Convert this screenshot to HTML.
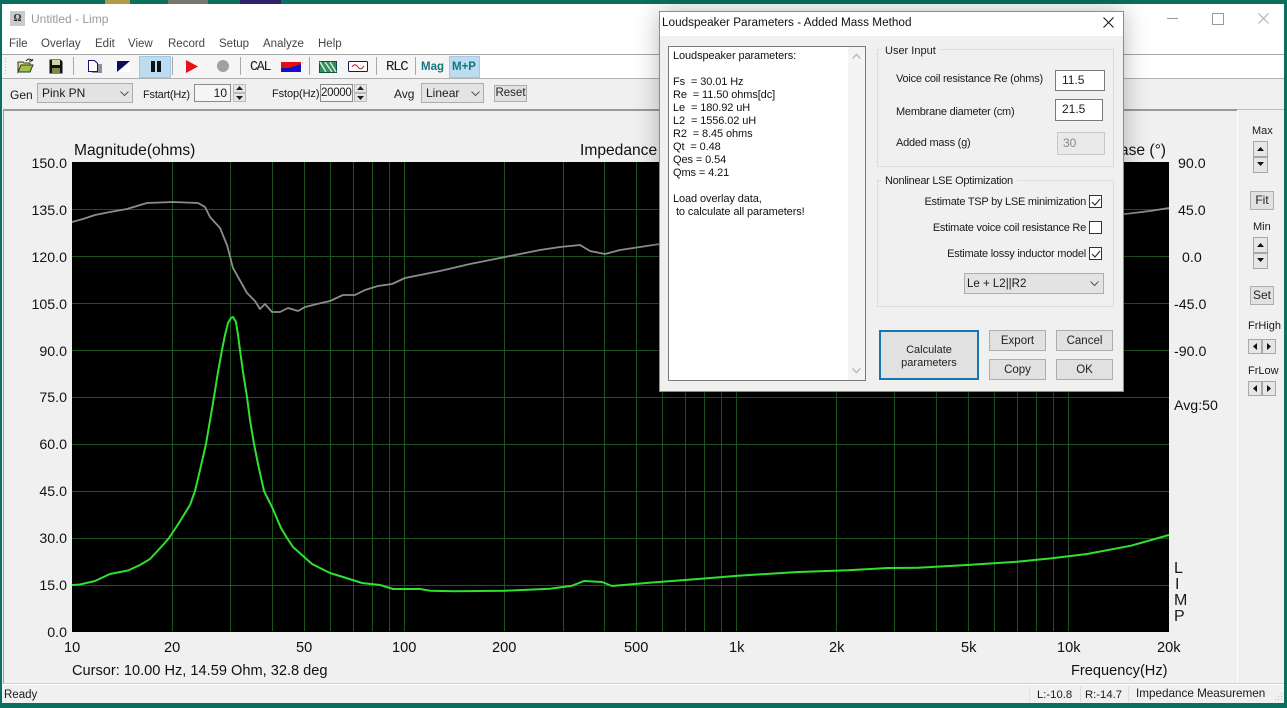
<!DOCTYPE html>
<html><head><meta charset="utf-8"><title>Untitled - Limp</title>
<style>
html,body{margin:0;padding:0;background:#0a6f5d;width:1287px;height:708px;overflow:hidden}
body{position:relative;font-family:"Liberation Sans",sans-serif;font-size:12px;color:#1a1a1a}
.a{position:absolute}
.t{position:absolute;white-space:nowrap;line-height:14px}
.c{position:absolute;white-space:nowrap;line-height:16px;font-size:14.6px;color:#111}
.r{text-align:right;width:50px;font-size:14.2px}
.m{position:absolute;white-space:nowrap;line-height:14px;color:#444;font-size:11.5px}
.sep{position:absolute;width:1px;height:18px;top:57px;background:#a8a8a8}
.btn{position:absolute;background:#e1e1e1;border:1px solid #adadad;box-sizing:border-box;text-align:center;color:#222}
.edit{position:absolute;background:#fff;border:1px solid #7a7a7a;box-sizing:border-box;line-height:18px}
.combo{position:absolute;background:#e3e3e3;border:1px solid #adadad;box-sizing:border-box;line-height:18px;padding-left:4px}
.spin{position:absolute;background:#e6e6e6;border:1px solid #a8a8a8;box-sizing:border-box}
.group{position:absolute;border:1px solid #dcdcdc;box-sizing:border-box}
.lg{position:absolute;background:#f0f0f0;padding:0 4px;line-height:14px;white-space:nowrap}
.chk{position:absolute;width:13px;height:13px;background:#fff;border:1px solid #333;box-sizing:border-box}
.d{font-size:11px;letter-spacing:-.23px}
svg{position:absolute;overflow:visible}
</style></head><body>
<div class="a" style="left:105px;top:0;width:25px;height:4px;background:#b59a45"></div>
<div class="a" style="left:168px;top:0;width:40px;height:4px;background:#77756f"></div>
<div class="a" style="left:240px;top:0;width:41px;height:4px;background:#2d2267"></div>

<!-- main window -->
<div class="a" style="left:2px;top:4px;width:1282px;height:699px;background:#f0f0f0"></div>
<div class="a" style="left:2px;top:4px;width:1282px;height:50px;background:#fff"></div>
<div class="a" style="left:2px;top:54px;width:1282px;height:1px;background:#a8a8a8"></div>
<div class="a" style="left:2px;top:55px;width:1282px;height:23px;background:#fff"></div>
<div class="a" style="left:2px;top:55px;width:478px;height:23px;background:#f5f5f5"></div>
<div class="a" style="left:2px;top:78px;width:1282px;height:1px;background:#b0b0b0"></div>
<div class="a" style="left:3px;top:109px;width:1234px;height:2px;background:#9a9a9a"></div>
<div class="a" style="left:3px;top:109px;width:1px;height:575px;background:#9a9a9a"></div>
<div class="a" style="left:1237px;top:109px;width:1px;height:575px;background:#fff"></div>
<div class="a" style="left:1237px;top:109px;width:47px;height:1px;background:#bdbdbd"></div>
<div class="a" style="left:2px;top:683px;width:1282px;height:1px;background:#d0d0d0"></div>
<div class="a" style="left:2px;top:684px;width:1282px;height:1px;background:#fff"></div>

<!-- title -->
<div class="a" style="left:10px;top:11px;width:15px;height:15px;background:#c9c9c9;text-align:center;font:bold 10px/15px 'Liberation Serif',serif;color:#222">Ω</div>
<div class="t" style="left:31px;top:12px;color:#999">Untitled - Limp</div>
<div class="a" style="left:1167px;top:18px;width:11px;height:1px;background:#999"></div>
<div class="a" style="left:1212px;top:13px;width:10px;height:10px;border:1px solid #999"></div>
<svg style="left:1258px;top:13px" width="11" height="11"><path d="M.5.5l10 10M10.500.5l-10 10" stroke="#aaa" fill="none"/></svg>

<!-- menu -->
<div class="m" style="left:9px;top:37px">File</div>
<div class="m" style="left:41px;top:37px">Overlay</div>
<div class="m" style="left:95px;top:37px">Edit</div>
<div class="m" style="left:128px;top:37px">View</div>
<div class="m" style="left:168px;top:37px">Record</div>
<div class="m" style="left:219px;top:37px">Setup</div>
<div class="m" style="left:263px;top:37px">Analyze</div>
<div class="m" style="left:318px;top:37px">Help</div>

<!-- toolbar -->
<svg style="left:5px;top:57px" width="2" height="20"><path d="M.5 1v18" stroke="#bbb" stroke-dasharray="1 2"/></svg>
<svg style="left:17px;top:58px" width="18" height="16"><path d="M1 4h5l1 1h6v2H5L1 14z" fill="#e9e27a" stroke="#333"/><path d="M1 14l3-7h12l-3 7z" fill="#9fc04a" stroke="#333"/><path d="M9 3c2-3 5-2 6 0M15 3l1-2M15 3l-3 0" stroke="#222" fill="none"/></svg>
<svg style="left:49px;top:59px" width="14" height="15"><path d="M.5.5h11l2 2v12H.5z" fill="#111"/><rect x="3" y="1" width="8" height="5" fill="#c9d8a0"/><rect x="3" y="9" width="8" height="5" fill="#7d8a4c"/></svg>
<div class="sep" style="left:73px"></div>
<svg style="left:88px;top:60px" width="14" height="13"><rect x="4" y="4" width="10" height="9" fill="#8f8f9c"/><path d="M.5.5h6l3 3v8h-9z" fill="#fff" stroke="#12127a"/></svg>
<svg style="left:117px;top:61px" width="14" height="12"><rect width="13" height="11" fill="#fff"/><path d="M0 0h13L0 11z" fill="#0c0c60"/></svg>
<div class="a" style="left:139px;top:56px;width:30px;height:20px;background:#bcdcf2;border:1px solid #a4c8e2"></div>
<div class="a" style="left:151px;top:61px;width:4px;height:11px;background:#111"></div>
<div class="a" style="left:157px;top:61px;width:4px;height:11px;background:#111"></div>
<div class="sep" style="left:172px"></div>
<svg style="left:186px;top:60px" width="13" height="13"><path d="M0 0l12 6.500L0 13z" fill="#e8101a"/></svg>
<div class="a" style="left:217px;top:60px;width:12px;height:12px;border-radius:50%;background:#a0a0a0"></div>
<div class="sep" style="left:240px"></div>
<div class="t" style="left:250px;top:60px;font-family:'Liberation Mono',monospace;font-size:14px;letter-spacing:-1.3px;transform:scaleX(.95);transform-origin:0 0">CAL</div>
<svg style="left:281px;top:62px" width="20" height="10"><rect width="20" height="10" fill="#1010c8"/><path d="M0 0h20v2L8 6H0z" fill="#e21010"/></svg>
<div class="sep" style="left:309px"></div>
<svg style="left:319px;top:61px" width="18" height="12"><rect x=".5" y=".5" width="17" height="11" fill="#2f8f5f" stroke="#0f4f3f"/><path d="M1 1l6 10M6 1l7 10M11 1l6 10" stroke="#d8e8d8" stroke-width="1.500"/></svg>
<svg style="left:348px;top:61px" width="20" height="11"><rect x=".5" y=".5" width="19" height="10" rx="1" fill="#fff" stroke="#15156a"/><path d="M4 6c2-3 4-3 6 0s4 2 6-1" stroke="#c01818" fill="none"/></svg>
<div class="sep" style="left:376px"></div>
<div class="t" style="left:386px;top:60px;font-family:'Liberation Mono',monospace;font-size:14px;letter-spacing:-1.3px">RLC</div>
<div class="sep" style="left:415px"></div>
<div class="t" style="left:421px;top:60px;font-weight:bold;font-size:11.500px;color:#13767a">Mag</div>
<div class="a" style="left:449px;top:56px;width:29px;height:20px;background:#bcdcf2;border:1px solid #a4c8e2"></div>
<div class="t" style="left:452px;top:60px;font-weight:bold;font-size:11.500px;color:#13767a">M+P</div>

<!-- row 2 -->
<div class="t" style="left:10px;top:88px">Gen</div>
<div class="combo" style="left:37px;top:83px;width:96px;height:20px">Pink PN</div>
<svg style="left:120px;top:91px" width="9" height="5"><path d="M.5.500l4 4 4-4" stroke="#555" fill="none"/></svg>
<div class="t" style="left:143px;top:88px;font-size:11px;letter-spacing:-.2px">Fstart(Hz)</div>
<div class="a" style="left:194px;top:84px;width:37px;height:18px;background:#f5f5f5;border:1px solid #8a8a8a;box-sizing:border-box;text-align:right;padding-right:3px;line-height:16px">10</div>
<div class="spin" style="left:233px;top:84px;width:13px;height:9px;border-color:#bbb"></div><div class="spin" style="left:233px;top:93px;width:13px;height:9px;border-color:#bbb"></div>
<svg style="left:236px;top:86px" width="7" height="15"><path d="M3.500 0L7 4H0zM0 10h7l-3.500 4z" fill="#222"/></svg>
<div class="t" style="left:272px;top:87px;font-size:11px;letter-spacing:-.1px">Fstop(Hz)</div>
<div class="a" style="left:320px;top:84px;width:33px;height:18px;background:#f5f5f5;border:1px solid #8a8a8a;box-sizing:border-box;text-align:right;padding-right:1px;line-height:16px;font-size:11.5px;letter-spacing:-.3px">20000</div>
<div class="spin" style="left:354px;top:84px;width:13px;height:9px;border-color:#bbb"></div><div class="spin" style="left:354px;top:93px;width:13px;height:9px;border-color:#bbb"></div>
<svg style="left:357px;top:86px" width="7" height="15"><path d="M3.500 0L7 4H0zM0 10h7l-3.500 4z" fill="#222"/></svg>
<div class="t" style="left:394px;top:87px">Avg</div>
<div class="combo" style="left:421px;top:83px;width:63px;height:20px">Linear</div>
<svg style="left:471px;top:91px" width="9" height="5"><path d="M.5.500l4 4 4-4" stroke="#555" fill="none"/></svg>
<div class="btn" style="left:494px;top:85px;width:33px;height:17px;line-height:14px;font-size:11.500px">Reset</div>

<!-- plot -->
<svg style="left:0;top:0" width="1287" height="708">
<rect x="72" y="162" width="1097" height="470" fill="#000"/>
<g stroke="#1d521f" stroke-width="1" fill="none">
<path d="M72 209.500H1169M72 256.500H1169M72 303.500H1169M72 350.500H1169M72 397.500H1169M72 444.500H1169M72 491.500H1169M72 538.500H1169M72 585.500H1169"/>
<path d="M172.500 162V631M230.500 162V631M272.500 162V631M304.500 162V631M330.500 162V631M353.500 162V631M372.500 162V631M389.500 162V631M404.500 162V631M504.500 162V631M563.500 162V631M604.500 162V631M636.500 162V631M662.500 162V631M685.500 162V631M704.500 162V631M721.500 162V631M736.500 162V631M836.500 162V631M894.500 162V631M936.500 162V631M968.500 162V631M994.500 162V631M1017.500 162V631M1036.500 162V631M1053.500 162V631M1068.500 162V631"/>
</g>
<polyline fill="none" stroke="#8c8c8c" stroke-width="1.800" stroke-linejoin="round" points="72,222 83,219 95,215 110,212 127,209 147,203 173,202 198,203 205,207 210,217 220,228 227,245 233,268 247,293 255,301 260,309 265,304 272,312 280,312 288,308 298,311 305,307 317,304 330,301 343,295 355,295 365,290 378,286 392,284 405,278 440,271 470,264 500,258 540,250 560,247 580,245 590,251 605,254 620,250 640,247 660,244"/>
<polyline fill="none" stroke="#8c8c8c" stroke-width="1.800" points="1100,218 1125,214 1150,211 1169,208"/>
<polyline fill="none" stroke="#2fe030" stroke-width="2" stroke-linejoin="round" points="72,585 80,584.500 95,581 110,574 128,570.500 140,565 150,559 163,545 169,538 177,526 182,518 190,505 195,491 200,470 206,444 214,397 218,372 222,350 225,335 228,323 231,318 233,317 236,322 238,335 240,350 243,372 247,397 250,420 254,444 258,464 264,491 272,507 281,528 287,538 293,547 312,564 330,573 343,577 362,583 380,585 393,589 404,589 420,589 430,590.700 455,591.300 505,590.700 550,588.700 572,585.700 584,581 602,582 612,586 649,582.700 698,579 738,575.700 798,572 848,570.300 888,568 918,567.700 967,565 1017,561.700 1052,558.300 1087,554 1131,545.700 1169,535"/>
</svg>

<!-- chart labels -->
<div class="t" style="left:74px;top:143px;font-size:15.6px;line-height:16px;color:#111">Magnitude(ohms)</div>
<div class="t" style="left:580px;top:143px;font-size:15.6px;line-height:16px;color:#111">Impedance</div>
<div class="t" style="left:1100px;top:143px;width:66px;text-align:right;font-size:15.6px;line-height:16px;color:#111">Phase (°)</div>
<div class="c r" style="left:17px;top:156px">150.0</div>
<div class="c r" style="left:17px;top:203px">135.0</div>
<div class="c r" style="left:17px;top:250px">120.0</div>
<div class="c r" style="left:17px;top:297px">105.0</div>
<div class="c r" style="left:17px;top:344px">90.0</div>
<div class="c r" style="left:17px;top:390px">75.0</div>
<div class="c r" style="left:17px;top:437px">60.0</div>
<div class="c r" style="left:17px;top:484px">45.0</div>
<div class="c r" style="left:17px;top:531px">30.0</div>
<div class="c r" style="left:17px;top:578px">15.0</div>
<div class="c r" style="left:17px;top:625px">0.0</div>
<div class="c" style="left:1178px;top:156px;font-size:14.2px">90.0</div>
<div class="c" style="left:1178px;top:203px;font-size:14.2px">45.0</div>
<div class="c" style="left:1182px;top:250px;font-size:14.2px">0.0</div>
<div class="c" style="left:1174px;top:297px;font-size:14.2px">-45.0</div>
<div class="c" style="left:1174px;top:344px;font-size:14.2px">-90.0</div>
<div class="c" style="left:1174px;top:398px;font-size:14.2px">Avg:50</div>
<div class="c" style="left:64px;top:640px">10</div>
<div class="c" style="left:164px;top:640px">20</div>
<div class="c" style="left:296px;top:640px">50</div>
<div class="c" style="left:392px;top:640px">100</div>
<div class="c" style="left:492px;top:640px">200</div>
<div class="c" style="left:624px;top:640px">500</div>
<div class="c" style="left:729px;top:640px">1k</div>
<div class="c" style="left:829px;top:640px">2k</div>
<div class="c" style="left:961px;top:640px">5k</div>
<div class="c" style="left:1057px;top:640px">10k</div>
<div class="c" style="left:1157px;top:640px">20k</div>
<div class="c" style="left:72px;top:663px">Cursor: 10.00 Hz, 14.59 Ohm, 32.8 deg</div>
<div class="c" style="left:1071px;top:663px">Frequency(Hz)</div>
<div class="t" style="left:1174px;top:561px;font-size:16px;line-height:16px">L</div>
<div class="t" style="left:1175px;top:577px;font-size:16px;line-height:16px">I</div>
<div class="t" style="left:1174px;top:593px;font-size:16px;line-height:16px">M</div>
<div class="t" style="left:1174px;top:609px;font-size:16px;line-height:16px">P</div>

<!-- right panel -->
<div class="t" style="left:1252px;top:124px;font-size:11px">Max</div>
<div class="spin" style="left:1253px;top:141px;width:15px;height:16px"></div>
<div class="spin" style="left:1253px;top:157px;width:15px;height:16px"></div>
<svg style="left:1257px;top:147px" width="7" height="20"><path d="M3.500 0L7 4H0zM0 15h7l-3.500 4z" fill="#111"/></svg>
<div class="btn" style="left:1250px;top:191px;width:24px;height:19px;line-height:17px;font-size:12px">Fit</div>
<div class="t" style="left:1253px;top:220px;font-size:11px">Min</div>
<div class="spin" style="left:1253px;top:237px;width:15px;height:16px"></div>
<div class="spin" style="left:1253px;top:253px;width:15px;height:16px"></div>
<svg style="left:1257px;top:243px" width="7" height="20"><path d="M3.500 0L7 4H0zM0 15h7l-3.500 4z" fill="#111"/></svg>
<div class="btn" style="left:1250px;top:286px;width:24px;height:19px;line-height:17px;font-size:12px">Set</div>
<div class="t" style="left:1248px;top:319px;font-size:11px">FrHigh</div>
<div class="spin" style="left:1248px;top:339px;width:14px;height:15px"></div>
<div class="spin" style="left:1262px;top:339px;width:14px;height:15px"></div>
<svg style="left:1253px;top:343px" width="18" height="7"><path d="M4 0v7L0 3.500zM14 0l4 3.500-4 3.500z" fill="#111"/></svg>
<div class="t" style="left:1248px;top:364px;font-size:11px">FrLow</div>
<div class="spin" style="left:1248px;top:381px;width:14px;height:15px"></div>
<div class="spin" style="left:1262px;top:381px;width:14px;height:15px"></div>
<svg style="left:1253px;top:385px" width="18" height="7"><path d="M4 0v7L0 3.500zM14 0l4 3.500-4 3.500z" fill="#111"/></svg>

<!-- status bar -->
<div class="t" style="left:4px;top:688px;font-size:11.5px">Ready</div>
<div class="a" style="left:1029px;top:686px;width:1px;height:16px;background:#e0e0e0"></div>
<div class="t" style="left:1037px;top:688px;font-size:11.3px">L:-10.8</div>
<div class="a" style="left:1080px;top:686px;width:1px;height:16px;background:#dcdcdc"></div>
<div class="t" style="left:1085px;top:688px;font-size:11.3px">R:-14.7</div>
<div class="a" style="left:1128px;top:686px;width:1px;height:16px;background:#dcdcdc"></div>
<div class="a" style="left:1136px;top:686px;width:131px;height:16px;overflow:hidden;line-height:16px;font-size:11.7px;white-space:nowrap">Impedance Measuremen</div>
<svg style="left:1274px;top:692px" width="9" height="9"><path d="M7 1h1v1H7zM4 4h1v1H4zM7 4h1v1H7zM1 7h1v1H1zM4 7h1v1H4zM7 7h1v1H7z" fill="#bbb"/></svg>

<!-- dialog -->
<div class="a" style="left:659px;top:11px;width:465px;height:381px;background:#f0f0f0;border:1px solid #8c8c8c;box-sizing:border-box;box-shadow:0 0 24px rgba(0,0,0,.28)"></div>
<div class="a" style="left:660px;top:12px;width:463px;height:24px;background:#fff"></div>
<div class="t" style="left:662px;top:16px;font-size:11.75px;color:#111">Loudspeaker Parameters - Added Mass Method</div>
<svg style="left:1103px;top:17px" width="11" height="11"><path d="M.5.5l10 10M10.500.5l-10 10" stroke="#111" fill="none"/></svg>

<div class="a" style="left:668px;top:46px;width:198px;height:335px;background:#fff;border:1px solid #7a7a7a;box-sizing:border-box"></div>
<div class="a" style="left:848px;top:47px;width:17px;height:333px;background:#f4f4f4"></div>
<svg style="left:852px;top:54px" width="9" height="5"><path d="M.5 4.500l4-4 4 4" stroke="#bbb" stroke-width="1.500" fill="none"/></svg>
<svg style="left:852px;top:368px" width="9" height="5"><path d="M.5.500l4 4 4-4" stroke="#bbb" stroke-width="1.500" fill="none"/></svg>
<div class="a" style="left:673px;top:50px;font-size:11px;line-height:13px;white-space:pre;color:#111;letter-spacing:-.1px">Loudspeaker parameters:

Fs  = 30.01 Hz
Re  = 11.50 ohms[dc]
Le  = 180.92 uH
L2  = 1556.02 uH
R2  = 8.45 ohms
Qt  = 0.48
Qes = 0.54
Qms = 4.21

Load overlay data,
 to calculate all parameters!</div>

<div class="group" style="left:877px;top:49px;width:237px;height:118px"></div>
<div class="lg" style="left:881px;top:44px;font-size:11px">User Input</div>
<div class="t d" style="left:896px;top:72px">Voice coil resistance Re (ohms)</div>
<div class="edit" style="left:1055px;top:70px;width:50px;height:21px;padding-left:6px;font-size:12px">11.5</div>
<div class="t d" style="left:896px;top:105px">Membrane diameter (cm)</div>
<div class="edit" style="left:1055px;top:99px;width:48px;height:22px;padding-left:6px;font-size:12px">21.5</div>
<div class="t d" style="left:896px;top:136px">Added mass (g)</div>
<div class="a" style="left:1057px;top:132px;width:48px;height:23px;background:#e9e9e9;border:1px solid #c8c8c8;box-sizing:border-box;padding-left:5px;line-height:20px;color:#8a8a8a">30</div>

<div class="group" style="left:877px;top:180px;width:237px;height:127px"></div>
<div class="lg" style="left:881px;top:174px;font-size:11px;letter-spacing:-.28px">Nonlinear LSE Optimization</div>
<div class="t d" style="right:201px;top:195px;letter-spacing:-.25px">Estimate TSP by LSE minimization</div>
<div class="chk" style="left:1089px;top:195px"></div>
<svg style="left:1091px;top:198px" width="10" height="8"><path d="M1 4l3 3 5-6" stroke="#333" fill="none" stroke-width="1.200"/></svg>
<div class="t d" style="right:201px;top:221px;letter-spacing:-.25px">Estimate voice coil resistance Re</div>
<div class="chk" style="left:1089px;top:221px"></div>
<div class="t d" style="right:201px;top:247px;letter-spacing:-.25px">Estimate lossy inductor model</div>
<div class="chk" style="left:1089px;top:247px"></div>
<svg style="left:1091px;top:250px" width="10" height="8"><path d="M1 4l3 3 5-6" stroke="#333" fill="none" stroke-width="1.200"/></svg>
<div class="combo" style="left:964px;top:273px;width:140px;height:21px;font-size:11.500px;padding-left:2px;line-height:20px">Le + L2||R2</div>
<svg style="left:1090px;top:281px" width="9" height="5"><path d="M.5.500l4 4 4-4" stroke="#555" fill="none"/></svg>

<div class="btn" style="left:879px;top:330px;width:100px;height:50px;border:2px solid #1a74b0;line-height:13px;padding-top:12px;font-size:11px">Calculate<br>parameters</div>
<div class="btn" style="left:989px;top:330px;width:57px;height:21px;line-height:21px;font-size:11.500px">Export</div>
<div class="btn" style="left:1056px;top:330px;width:57px;height:21px;line-height:21px;font-size:11.500px">Cancel</div>
<div class="btn" style="left:989px;top:359px;width:57px;height:21px;line-height:21px;font-size:11.500px">Copy</div>
<div class="btn" style="left:1056px;top:359px;width:57px;height:21px;line-height:21px;font-size:11.500px">OK</div>
</body></html>
